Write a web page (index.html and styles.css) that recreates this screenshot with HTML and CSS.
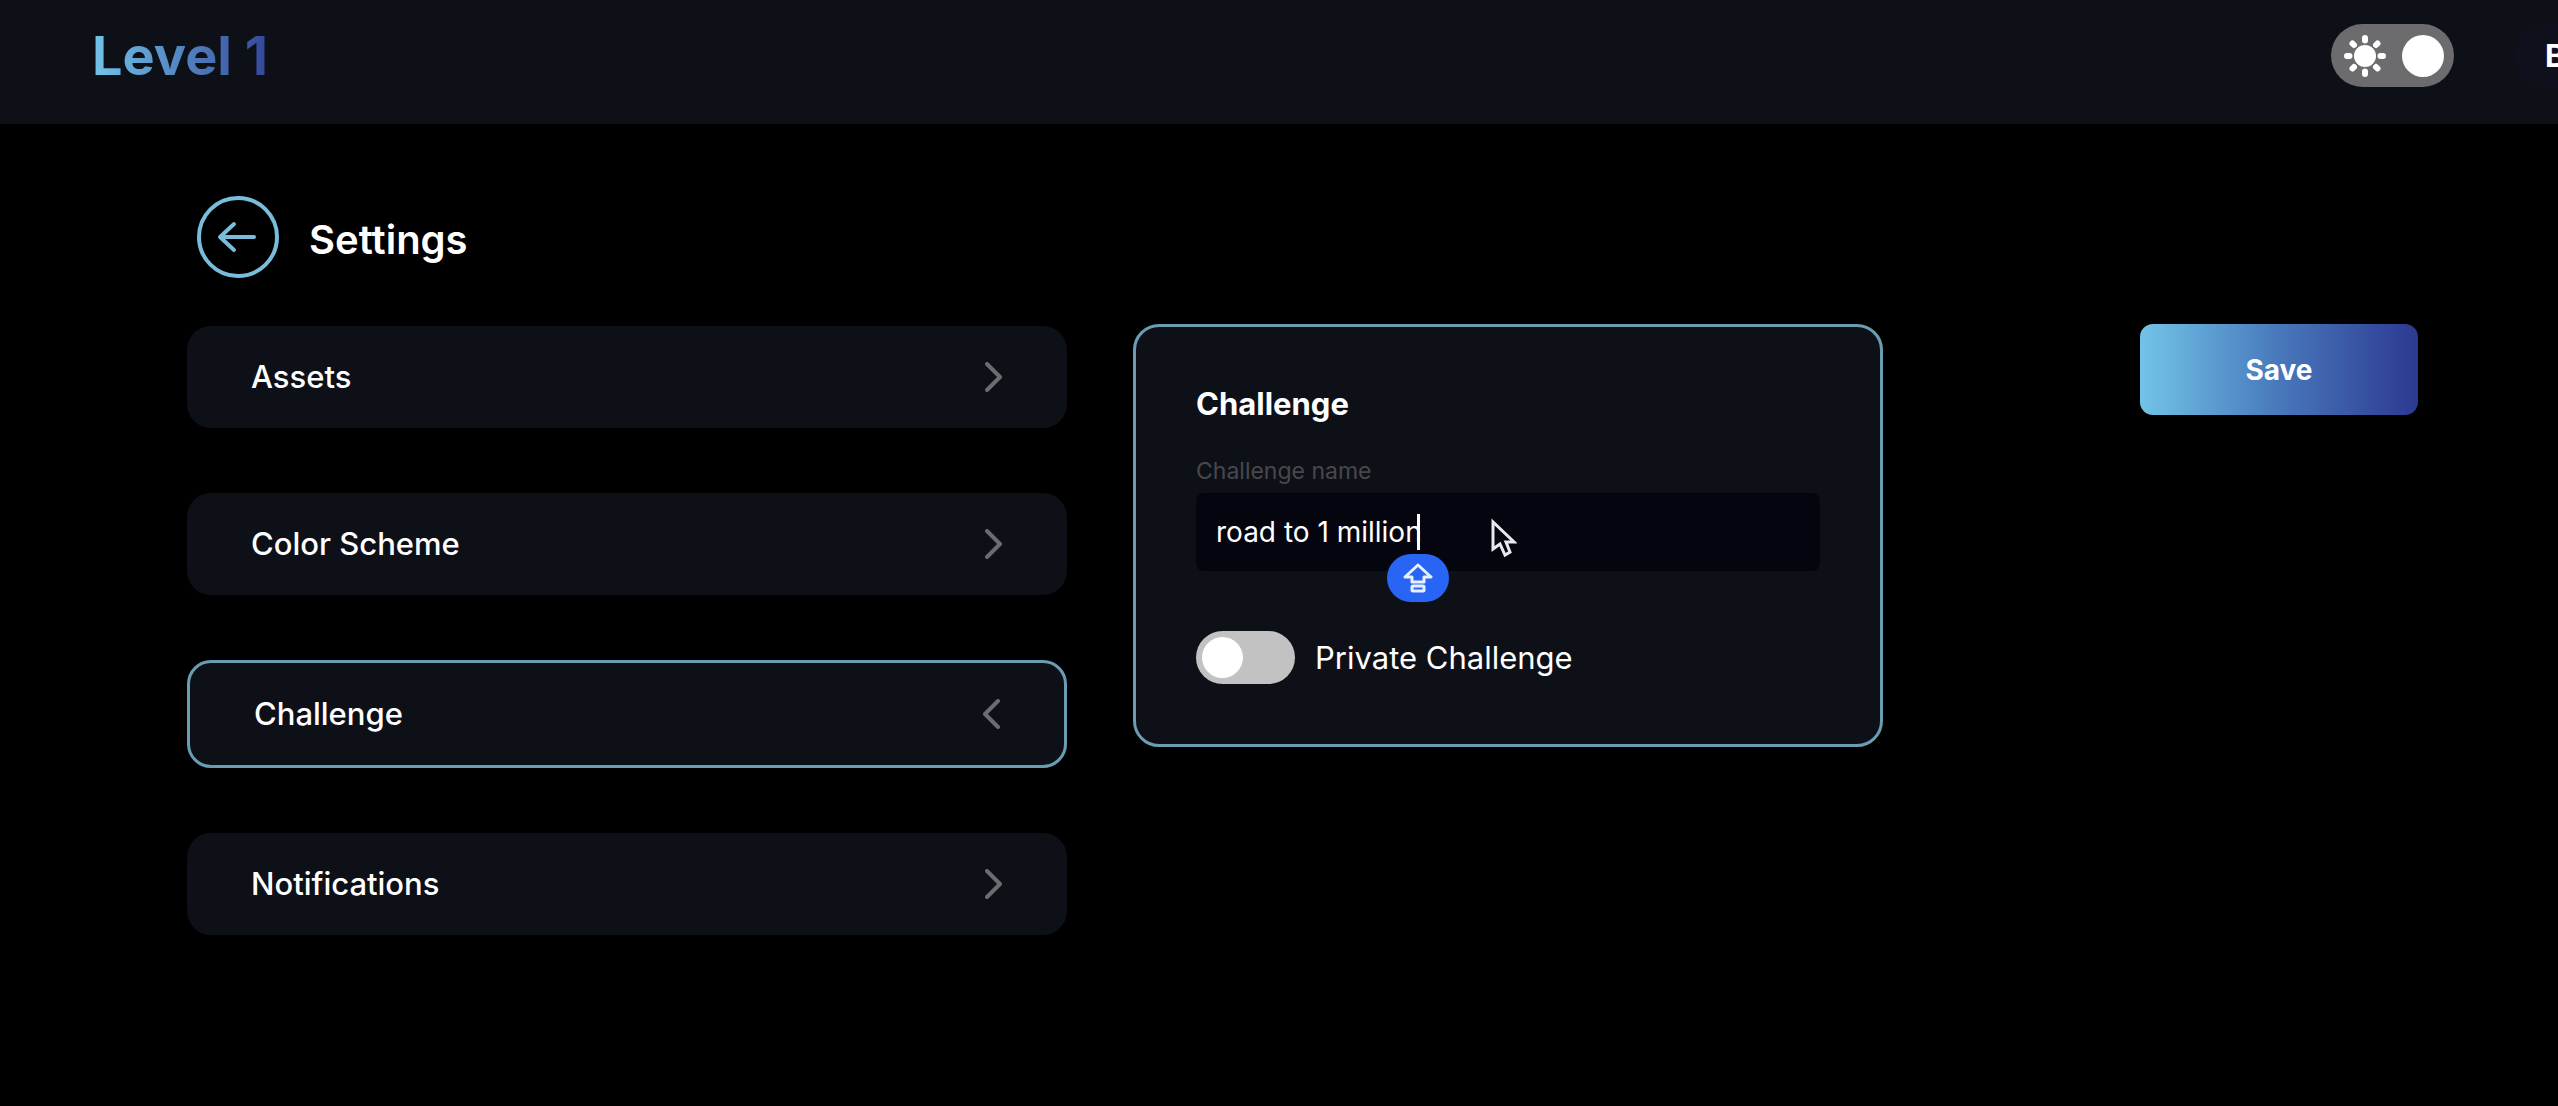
FILE: index.html
```html
<!DOCTYPE html>
<html lang="en">
<head>
  <meta charset="utf-8">
  <meta name="viewport" content="width=device-width, initial-scale=1">
  <title>Settings – Level 1</title>
  <link rel="stylesheet" href="styles.css">
</head>
<body>
  <header class="topbar">
    <a class="logo" href="#">Level 1</a>
    <div class="topbar-actions">
      <label class="theme-switch">
        <input type="checkbox" role="switch" aria-label="Light theme" checked>
        <svg class="sun" viewBox="0 0 42 42" aria-hidden="true">
          <circle cx="21" cy="21" r="11" fill="#fff"/>
          <path d="M21 3v2.500M21 36.500v2.500M3 21h2.500M36.500 21h2.500M8.500 8.500l1.500 1.500M32 32l1.500 1.500M33.500 8.500l-1.500 1.500M10 32l-1.500 1.500" stroke="#fff" stroke-width="6" stroke-linecap="round"/>
        </svg>
        <span class="theme-knob"></span>
      </label>
      <button class="user-menu" type="button">B</button>
    </div>
  </header>

  <main class="page">
    <div class="page-head">
      <a class="back" href="#" aria-label="Back">
        <svg viewBox="0 0 82 82" fill="none" stroke="#79bddb" stroke-width="4" stroke-linecap="round" stroke-linejoin="round" aria-hidden="true">
          <circle cx="41" cy="41" r="39"/>
          <path d="M57 41H23M37 28L23 41L37 54"/>
        </svg>
      </a>
      <h1 class="title">Settings</h1>
    </div>

    <div class="columns">
      <nav class="menu">
        <button class="menu-item" type="button">Assets
          <svg class="chevron" viewBox="0 0 18 30" aria-hidden="true"><path d="M2 2L15 15L2 28"/></svg>
        </button>
        <button class="menu-item" type="button">Color Scheme
          <svg class="chevron" viewBox="0 0 18 30" aria-hidden="true"><path d="M2 2L15 15L2 28"/></svg>
        </button>
        <button class="menu-item is-open" type="button" aria-expanded="true">Challenge
          <svg class="chevron" viewBox="0 0 18 30" aria-hidden="true"><path d="M16 2L3 15L16 28"/></svg>
        </button>
        <button class="menu-item" type="button">Notifications
          <svg class="chevron" viewBox="0 0 18 30" aria-hidden="true"><path d="M2 2L15 15L2 28"/></svg>
        </button>
      </nav>

      <section class="card">
        <h2 class="card-title">Challenge</h2>
        <label class="field-label" for="challenge-name">Challenge name</label>
        <div class="field">
          <input class="field-input" id="challenge-name" type="text" value="road to 1 million">
          <span class="caret"></span>
          <span class="caps-badge">
            <svg viewBox="0 0 30 30" fill="none" stroke="#e6f0ff" stroke-width="3" stroke-linejoin="round" aria-hidden="true">
              <path d="M15 2L28 14H21V19H9V14H2Z"/>
              <rect x="9" y="23" width="12" height="5" rx="1"/>
            </svg>
          </span>
          <svg class="pointer" viewBox="0 0 26 40" fill="#05050f" stroke="#e8e8ee" stroke-width="3" stroke-linejoin="miter" aria-hidden="true">
            <path d="M2 4V31L9 26L14 37L19 34L15 24H23Z"/>
          </svg>
        </div>
        <label class="private">
          <input class="switch" type="checkbox" role="switch">
          Private Challenge
        </label>
      </section>

      <button class="save" type="button">Save</button>
    </div>
  </main>
</body>
</html>
```
FILE: styles.css
```css
* {
  box-sizing: border-box;
}

body {
  margin: 0;
  min-height: 100vh;
  background: #000;
  color: #fff;
  font-family: Inter, "Liberation Sans", sans-serif;
}

button,
input {
  margin: 0;
  border: 0;
  color: inherit;
  font-family: inherit;
}

svg {
  display: block;
}

.topbar {
  display: flex;
  align-items: center;
  justify-content: space-between;
  padding: 24px 0 37px 92px;
  background: #0e1018;
}

.logo {
  font-size: 54px;
  font-weight: 700;
  line-height: 63px;
  text-decoration: none;
  color: transparent;
  background: linear-gradient(90deg, #72c4e8, #35479b);
  background-clip: text;
  -webkit-background-clip: text;
}

.topbar-actions {
  display: flex;
  align-items: center;
  gap: 61px;
}

.theme-switch {
  display: flex;
  align-items: center;
  justify-content: space-between;
  width: 123px;
  height: 63px;
  padding: 0 10px 0 13px;
  border-radius: 32px;
  background: #6c6c6e;
}

.theme-switch input {
  position: absolute;
  opacity: 0;
}

.sun,
.theme-knob {
  width: 42px;
  height: 42px;
}

.theme-knob {
  border-radius: 50%;
  background: #fff;
}

.user-menu {
  width: 43px;
  height: 63px;
  padding: 0 0 0 30px;
  overflow: hidden;
  border-radius: 32px 0 0 32px;
  background: #0f101b;
  font-size: 31px;
  font-weight: 700;
  text-align: left;
}

.page {
  padding: 72px 140px 72px 187px;
}

.page-head {
  display: flex;
  align-items: center;
  gap: 30px;
  padding-left: 10px;
}

.back svg {
  width: 82px;
  height: 82px;
}

.title {
  margin: 0;
  padding-top: 6px;
  font-size: 40px;
  font-weight: 600;
  line-height: 48px;
}

.columns {
  display: grid;
  grid-template-columns: 880fr 750fr 469fr;
  align-items: start;
  gap: 66px;
  margin-top: 46px;
}

.menu {
  display: grid;
  gap: 65px;
  padding-top: 2px;
}

.menu-item {
  display: flex;
  align-items: center;
  justify-content: space-between;
  padding: 32px 64px;
  border-radius: 24px;
  background: #0e1018;
  font-size: 31px;
  font-weight: 500;
  line-height: 38px;
}

.menu-item.is-open,
.card {
  border: 3px solid #6a9db4;
}

.chevron {
  width: 18px;
  height: 30px;
  fill: none;
  stroke: #6c6c70;
  stroke-width: 4;
  stroke-linecap: round;
  stroke-linejoin: round;
}

.card {
  padding: 60px;
  border-radius: 26px;
  background: #0e1018;
}

.card-title {
  margin: 0 0 36px;
  font-size: 31px;
  font-weight: 700;
  line-height: 34px;
}

.field-label {
  display: block;
  margin-bottom: 8px;
  color: #48484c;
  font-size: 23px;
  line-height: 28px;
}

.field {
  position: relative;
}

.field-input {
  display: block;
  width: 100%;
  height: 78px;
  padding: 0 20px;
  border-radius: 8px;
  background: #05050f;
  font-size: 28px;
}

.caret {
  position: absolute;
  top: 21px;
  left: 221px;
  width: 3px;
  height: 36px;
  background: #fff;
}

.caps-badge {
  position: absolute;
  top: 61px;
  left: 191px;
  display: grid;
  place-items: center;
  width: 62px;
  height: 48px;
  border-radius: 24px;
  background: #2865f5;
}

.caps-badge svg {
  width: 30px;
  height: 30px;
}

.pointer {
  position: absolute;
  top: 25px;
  left: 295px;
  width: 26px;
  height: 40px;
}

.private {
  display: flex;
  align-items: center;
  gap: 20px;
  margin-top: 60px;
  font-size: 31px;
}

.switch {
  display: flex;
  align-items: center;
  width: 99px;
  height: 53px;
  padding: 6px;
  border-radius: 27px;
  background: #c2c2c3;
  appearance: none;
}

.switch::before {
  content: "";
  width: 41px;
  height: 41px;
  border-radius: 50%;
  background: #fff;
}

.switch:checked {
  justify-content: flex-end;
}

.save {
  justify-self: end;
  width: 278px;
  height: 91px;
  border-radius: 13px;
  background: linear-gradient(90deg, #72c4e8, #4878bb 50%, #2c3991);
  font-size: 28px;
  font-weight: 700;
}
```
